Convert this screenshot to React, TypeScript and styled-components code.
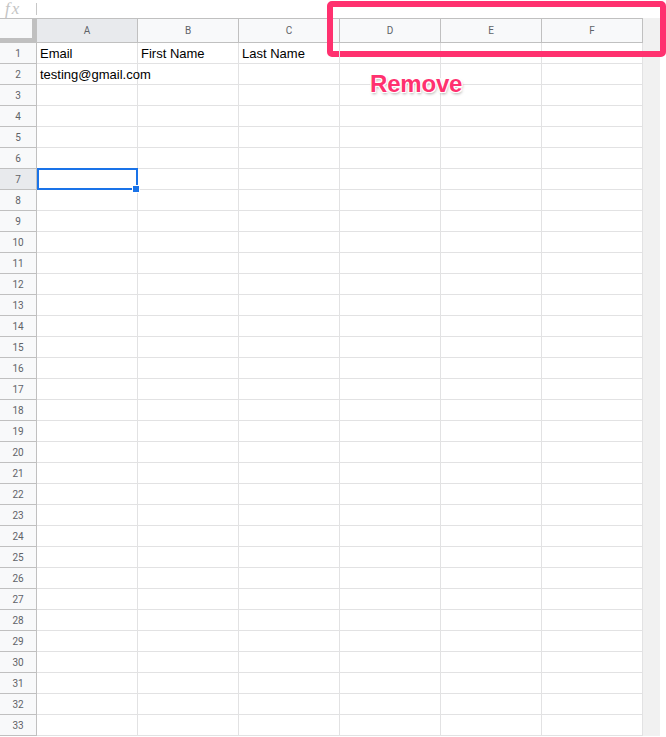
import React from 'react';
import styled, { createGlobalStyle } from 'styled-components';

const COLORS = {
  headerBg: '#f8f9fa',
  headerActive: '#e8eaed',
  headerLine: '#c0c0c0',
  gridLine: '#e2e2e3',
  headerText: '#5f6368',
  blue: '#1a73e8',
  pink: '#ff316f',
  scroll: '#f1f1f1',
};

const GlobalStyle = createGlobalStyle`
  html, body {
    margin: 0;
    padding: 0;
    background: #ffffff;
  }
  body {
    font-family: "Liberation Sans", Arial, sans-serif;
  }
`;

const Page = styled.div`
  position: relative;
  width: 666px;
  height: 737px;
  overflow: hidden;
`;

const FormulaBar = styled.div`
  display: flex;
  align-items: center;
  height: 18px;
`;

const FxLabel = styled.div`
  width: 36px;
  padding-left: 5px;
  box-sizing: border-box;
  font-family: "Liberation Serif", serif;
  font-style: italic;
  font-size: 17px;
  line-height: 18px;
  letter-spacing: 2px;
  color: #c4c4c4;
`;

const FxDivider = styled.div`
  width: 1px;
  height: 12px;
  background: #c7c7c7;
`;

const Sheet = styled.div`
  display: grid;
  grid-template-columns: 37px repeat(6, 101px) 17px;
  grid-template-rows: 25px;
  grid-auto-rows: 21px;
`;

const Corner = styled.div`
  box-sizing: border-box;
  background: ${COLORS.headerBg};
  border-top: 1px solid ${COLORS.headerLine};
  border-right: 5px solid ${COLORS.headerLine};
  border-bottom: 5px solid ${COLORS.headerLine};
`;

const ColHeader = styled.div<{ $active?: boolean }>`
  box-sizing: border-box;
  display: flex;
  align-items: center;
  justify-content: center;
  background: ${(p) => (p.$active ? COLORS.headerActive : COLORS.headerBg)};
  border-top: 1px solid ${COLORS.headerLine};
  border-right: 1px solid ${COLORS.headerLine};
  border-bottom: 1px solid ${COLORS.headerLine};
  font-family: Roboto, "Liberation Sans", sans-serif;
  font-size: 10px;
  color: ${COLORS.headerText};
`;

const RowHeader = styled.div<{ $active?: boolean }>`
  box-sizing: border-box;
  display: flex;
  align-items: center;
  justify-content: center;
  background: ${(p) => (p.$active ? COLORS.headerActive : COLORS.headerBg)};
  border-right: 1px solid ${COLORS.headerLine};
  border-bottom: 1px solid ${COLORS.headerLine};
  font-family: Roboto, "Liberation Sans", sans-serif;
  font-size: 10px;
  color: ${COLORS.headerText};
`;

const Cell = styled.div<{ $z?: number }>`
  position: relative;
  box-sizing: border-box;
  display: flex;
  align-items: center;
  padding-left: 3px;
  border-right: 1px solid ${COLORS.gridLine};
  border-bottom: 1px solid ${COLORS.gridLine};
  font-size: 13px;
  color: #000000;
  white-space: nowrap;
  overflow: visible;
  z-index: ${(p) => p.$z ?? 0};
`;

const Selection = styled.div`
  position: absolute;
  top: -1px;
  left: 0;
  right: -1px;
  bottom: -1px;
  border: 2px solid ${COLORS.blue};
  pointer-events: none;
`;

const FillHandle = styled.div`
  position: absolute;
  right: -4px;
  bottom: -5px;
  width: 6px;
  height: 6px;
  background: ${COLORS.blue};
  border: 1px solid #ffffff;
  box-sizing: content-box;
`;

const Scrollbar = styled.div`
  grid-column: 8;
  grid-row: 1 / span 34;
  background: ${COLORS.scroll};
`;

const Highlight = styled.div`
  position: absolute;
  left: 327px;
  top: 1px;
  width: 339px;
  height: 56px;
  box-sizing: border-box;
  border: 6px solid ${COLORS.pink};
  border-radius: 5px;
`;

const Note = styled.div`
  position: absolute;
  left: 370px;
  top: 72px;
  font-size: 24px;
  line-height: 24px;
  font-weight: 700;
  letter-spacing: -0.2px;
  color: ${COLORS.pink};
  text-shadow: -1px -1px 0 #fff, 1px -1px 0 #fff, -1px 1px 0 #fff, 1px 1px 0 #fff,
    0 -1px 0 #fff, 0 1px 0 #fff, 1px 2px 3px rgba(0, 0, 0, 0.35);
`;

const COLUMNS = ['A', 'B', 'C', 'D', 'E', 'F'];
const ROW_COUNT = 33;
const DATA: Record<number, string[]> = {
  1: ['Email', 'First Name', 'Last Name'],
  2: ['testing@gmail.com'],
};
const SELECTED = { row: 7, col: 0 };

const App = () => {
  const rows = Array.from({ length: ROW_COUNT }, (_, i) => i + 1);

  return (
    <Page>
      <GlobalStyle />
      <FormulaBar>
        <FxLabel>fx</FxLabel>
        <FxDivider />
      </FormulaBar>
      <Sheet>
        <Corner />
        {COLUMNS.map((c, i) => (
          <ColHeader key={c} $active={i === SELECTED.col}>
            {c}
          </ColHeader>
        ))}
        <Scrollbar />
        {rows.map((r) => (
          <React.Fragment key={r}>
            <RowHeader $active={r === SELECTED.row}>{r}</RowHeader>
            {COLUMNS.map((c, i) => {
              const isSelected = r === SELECTED.row && i === SELECTED.col;
              const value = DATA[r]?.[i] ?? '';
              return (
                <Cell key={c} $z={isSelected || value ? 2 : 0}>
                  {value}
                  {isSelected && (
                    <Selection>
                      <FillHandle />
                    </Selection>
                  )}
                </Cell>
              );
            })}
          </React.Fragment>
        ))}
      </Sheet>
      <Highlight />
      <Note>Remove</Note>
    </Page>
  );
};

export default App;
